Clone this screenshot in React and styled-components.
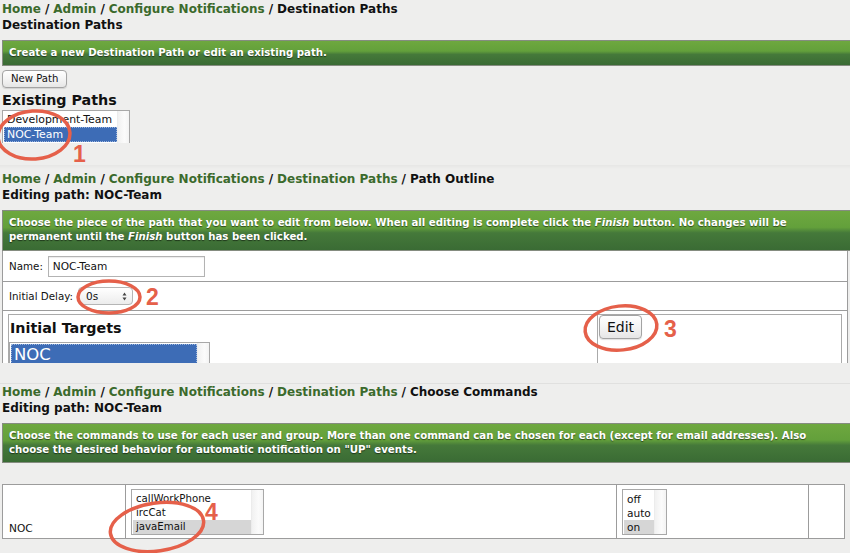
import React from 'react';
import styled, { createGlobalStyle } from 'styled-components';

const GlobalStyle = createGlobalStyle`
  body {
    margin: 0;
    background: #eeeeed;
  }
`;

const Page = styled.div`
  position: relative;
  width: 850px;
  height: 553px;
  overflow: hidden;
  background: #eeeeed;
  font-family: "DejaVu Sans", Verdana, sans-serif;
  color: #111;
`;

const Panel = styled.section`
  height: ${(p) => p.$height}px;
  padding-top: ${(p) => p.$padTop || 0}px;
  box-sizing: border-box;
  overflow: hidden;
  border-top: ${(p) => (p.$rule ? '1px solid #e0e0df' : 'none')};
  margin-top: ${(p) => p.$gap || 0}px;
  background: ${(p) =>
    p.$shade
      ? 'linear-gradient(to bottom, #e6e6e5 0px, #eeeeed 4px, #eeeeed 100%)'
      : '#eeeeed'};
`;

const Crumbs = styled.div`
  padding-left: 2px;
  font-size: 12px;
  font-weight: bold;
  line-height: 16px;
  white-space: nowrap;
`;

const Crumb = styled.a`
  color: #3b6a2c;
  text-decoration: none;
`;

const Sep = styled.span`
  padding: 0 4px;
`;

const Title = styled.div`
  padding-left: 2px;
  font-size: 12px;
  font-weight: bold;
  line-height: 16px;
`;

const Banner = styled.div`
  margin: 7px 0 0 2px;
  height: ${(p) => p.$height}px;
  box-sizing: border-box;
  padding: ${(p) => p.$pad};
  border: 1px solid #858c80;
  border-right: none;
  background: linear-gradient(
    to bottom,
    #6ea83f 0%,
    #63a03b 42%,
    #45793a 56%,
    #3a6b34 100%
  );
  color: #fff;
  font-size: 10.2px;
  font-weight: bold;
  line-height: 14px;
  text-shadow: 0 1px 1px rgba(0, 0, 0, 0.55);
  white-space: nowrap;
`;

const Button = styled.button`
  display: block;
  margin: ${(p) => p.$margin || 0};
  height: ${(p) => p.$height}px;
  padding: 0 ${(p) => p.$padX}px;
  border: 1px solid #a3a3a3;
  border-radius: 4px;
  background: linear-gradient(to bottom, #ffffff 0%, #f4f4f4 50%, #e6e6e6 100%);
  box-shadow: 0 1px 1px rgba(0, 0, 0, 0.12);
  font-family: "DejaVu Sans", Verdana, sans-serif;
  font-size: ${(p) => p.$size}px;
  color: #111;
  line-height: 1;
`;

const Heading = styled.h2`
  margin: ${(p) => p.$margin};
  font-size: 14.3px;
  font-weight: bold;
  line-height: 16px;
`;

const ListBox = styled.div`
  position: relative;
  width: ${(p) => p.$width}px;
  height: ${(p) => p.$height}px;
  margin: ${(p) => p.$margin || 0};
  box-sizing: border-box;
  padding: ${(p) => p.$pad || '2px 12px 0 1px'};
  background: #fff;
  border: 1px solid #a8a8a8;
  border-bottom: ${(p) => (p.$open ? 'none' : '1px solid #a8a8a8')};
  overflow: hidden;

  &::after {
    content: '';
    position: absolute;
    top: 0;
    right: 0;
    bottom: 0;
    width: 11px;
    background: linear-gradient(to right, #f1f1f1, #fbfbfb 60%, #f3f3f3);
    border-left: 1px solid #ececec;
  }
`;

const Option = styled.div`
  padding-left: ${(p) => p.$indent || 3}px;
  font-size: ${(p) => p.$size}px;
  line-height: ${(p) => p.$line}px;
  white-space: nowrap;
  color: ${(p) => (p.$active ? '#fff' : '#111')};
  background: ${(p) =>
    p.$active ? '#3d6cb6' : p.$dim ? '#d6d6d6' : 'transparent'};
  outline: ${(p) => (p.$focus ? '1px dotted #9bb4dc' : 'none')};
  outline-offset: -1px;
`;

const FormTable = styled.div`
  margin-left: 2px;
  width: 844px;
  background: #fff;
  border: 1px solid #9c9c9c;
  border-top: none;
`;

const FormRow = styled.div`
  display: flex;
  align-items: center;
  height: ${(p) => p.$height}px;
  box-sizing: border-box;
  padding-left: 6px;
  border-bottom: 1px solid #9c9c9c;
  font-size: 10.3px;
  gap: 5px;
`;

const TextInput = styled.div`
  width: 157px;
  height: 21px;
  box-sizing: border-box;
  padding-left: 4px;
  border: 1px solid #b3b3b3;
  box-shadow: inset 0 1px 1px rgba(0, 0, 0, 0.08);
  font-size: 10.6px;
  line-height: 19px;
`;

const Select = styled.div`
  display: flex;
  align-items: center;
  justify-content: space-between;
  width: 55px;
  height: 18px;
  box-sizing: border-box;
  padding: 0 5px 0 7px;
  border: 1px solid #b5b5b5;
  border-radius: 4px;
  background: linear-gradient(to bottom, #ffffff, #ececec);
  font-size: 10.5px;
`;

const TargetsRow = styled.div`
  padding: 3px 5px 0 5px;
`;

const Inner = styled.div`
  display: grid;
  grid-template-columns: 588px 1fr;
  height: 60px;
  border: 1px solid #aaaaaa;
  border-bottom: none;
`;

const InnerCell = styled.div`
  padding: ${(p) => p.$pad};
  border-left: ${(p) => (p.$divider ? '1px solid #aaaaaa' : 'none')};
`;

const CommandTable = styled.div`
  display: grid;
  grid-template-columns: 122px 491px 192px 1fr;
  margin: 21px 0 0 2px;
  width: 843px;
  height: 55px;
  box-sizing: border-box;
  background: #fff;
  border: 1px solid #9c9c9c;
`;

const CommandCell = styled.div`
  display: flex;
  align-items: ${(p) => p.$align || 'flex-start'};
  padding: ${(p) => p.$pad || '4px 5px'};
  border-left: ${(p) => (p.$first ? 'none' : '1px solid #9c9c9c')};
  font-size: 10.6px;
`;

const Ring = styled.svg`
  position: absolute;
  left: ${(p) => p.$x}px;
  top: ${(p) => p.$y}px;
  overflow: visible;
  pointer-events: none;
`;

const Marker = styled.span`
  position: absolute;
  left: ${(p) => p.$x}px;
  top: ${(p) => p.$y}px;
  font-family: "Liberation Sans", Arial, sans-serif;
  font-size: 23px;
  font-weight: bold;
  line-height: 1;
  color: #e5604a;
`;

const Annotation = ({ x, y, rx, ry, rotate = 0, label, lx, ly }) => (
  <>
    <Ring $x={x - rx - 3} $y={y - ry - 3} width={rx * 2 + 6} height={ry * 2 + 6}>
      <ellipse
        cx={rx + 3}
        cy={ry + 3}
        rx={rx}
        ry={ry}
        fill="none"
        stroke="#e5604a"
        strokeWidth="3.5"
        transform={`rotate(${rotate} ${rx + 3} ${ry + 3})`}
      />
    </Ring>
    <Marker $x={lx} $y={ly}>{label}</Marker>
  </>
);

const Breadcrumb = ({ items, current }) => (
  <Crumbs>
    {items.map((item) => (
      <React.Fragment key={item}>
        <Crumb href="#">{item}</Crumb>
        <Sep>/</Sep>
      </React.Fragment>
    ))}
    {current}
  </Crumbs>
);

const Arrows = () => (
  <svg width="5" height="9" viewBox="0 0 5 9">
    <path d="M2.5 0.5 L4.5 3.5 L0.5 3.5 Z M2.5 8.5 L4.5 5.5 L0.5 5.5 Z" fill="#444" />
  </svg>
);

const trail = ['Home', 'Admin', 'Configure Notifications'];

export default function App() {
  return (
    <Page>
      <GlobalStyle />

      <Panel $height={165} $padTop={1}>
        <Breadcrumb items={trail} current="Destination Paths" />
        <Title>Destination Paths</Title>
        <Banner $height={26} $pad="5px 0 0 6px">
          Create a new Destination Path or edit an existing path.
        </Banner>
        <Button $margin="4px 0 0 2px" $height={18} $padX={8} $size={10.1}>
          New Path
        </Button>
        <Heading $margin="4px 0 0 2px">Existing Paths</Heading>
        <ListBox $width={128} $height={33} $margin="2px 0 0 2px" $open>
          <Option $size={10.9} $line={14}>Development-Team</Option>
          <Option $size={10.9} $line={15} $active $focus>NOC-Team</Option>
        </ListBox>
      </Panel>

      <Panel $height={198} $padTop={6} $shade>
        <Breadcrumb items={[...trail, 'Destination Paths']} current="Path Outline" />
        <Title>Editing path: NOC-Team</Title>
        <Banner $height={41} $pad="5px 0 0 6px">
          Choose the piece of the path that you want to edit from below. When all editing is
          complete click the <i>Finish</i> button. No changes will be
          <br />
          permanent until the <i>Finish</i> button has been clicked.
        </Banner>
        <FormTable>
          <FormRow $height={31}>
            Name:
            <TextInput>NOC-Team</TextInput>
          </FormRow>
          <FormRow $height={29}>
            Initial Delay:
            <Select>
              0s
              <Arrows />
            </Select>
          </FormRow>
          <TargetsRow>
            <Inner>
              <InnerCell $pad="4px 0 0 0">
                <Heading $margin="1px 0 6px 1px">Initial Targets</Heading>
                <ListBox $width={201} $height={30} $pad="1px 12px 0 1px" $open>
                  <Option $size={16.5} $line={22} $indent={3} $active $focus>NOC</Option>
                </ListBox>
              </InnerCell>
              <InnerCell $divider $pad="0 0 0 1px">
                <Button $height={24} $padX={7} $size={14}>Edit</Button>
              </InnerCell>
            </Inner>
          </TargetsRow>
        </FormTable>
      </Panel>

      <Panel $height={170} $gap={20} $rule>
        <Breadcrumb items={[...trail, 'Destination Paths']} current="Choose Commands" />
        <Title>Editing path: NOC-Team</Title>
        <Banner $height={40} $pad="5px 0 0 6px">
          Choose the commands to use for each user and group. More than one command can be
          chosen for each (except for email addresses). Also
          <br />
          choose the desired behavior for automatic notification on "UP" events.
        </Banner>
        <CommandTable>
          <CommandCell $first $align="flex-end" $pad="0 0 5px 6px">NOC</CommandCell>
          <CommandCell $pad="4px 5px">
            <ListBox $width={133} $height={46} $pad="2px 12px 0 1px">
              <Option $size={10.2} $line={14}>callWorkPhone</Option>
              <Option $size={10.2} $line={14}>ircCat</Option>
              <Option $size={10.2} $line={14} $dim>javaEmail</Option>
            </ListBox>
          </CommandCell>
          <CommandCell $pad="4px 5px">
            <ListBox $width={45} $height={46} $pad="2px 12px 0 1px">
              <Option $size={10.6} $line={14}>off</Option>
              <Option $size={10.6} $line={14}>auto</Option>
              <Option $size={10.6} $line={14} $dim>on</Option>
            </ListBox>
          </CommandCell>
          <CommandCell />
        </CommandTable>
      </Panel>

      <Annotation x={34} y={135} rx={36} ry={24} rotate={-4} label="1" lx={73} ly={143} />
      <Annotation x={109} y={297} rx={31} ry={16} label="2" lx={146} ly={286} />
      <Annotation x={621} y={328} rx={36} ry={22} rotate={-6} label="3" lx={664} ly={318} />
      <Annotation x={157} y={527} rx={47} ry={24} rotate={-8} label="4" lx={205} ly={501} />
    </Page>
  );
}
